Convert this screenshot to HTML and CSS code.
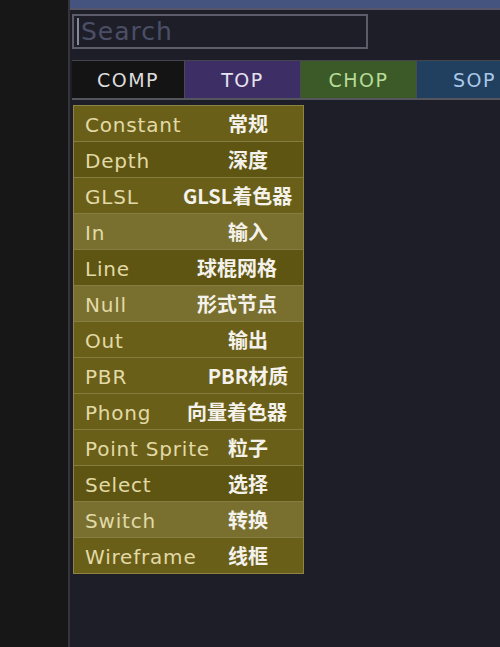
FILE: index.html
```html
<!DOCTYPE html>
<html lang="en">
<head>
    <meta charset="UTF-8">
    <title>OP Create Menu</title>
    <link rel="stylesheet" href="styles.css">
</head>
<body>
    <div class="sidebar"></div>
    <div class="main">
        <div class="top-bar"></div>

        <div class="search-box">
            <span class="caret"></span>
            <span class="placeholder">Search</span>
        </div>

        <div class="tabs">
            <div class="tab tab-comp">COMP</div>
            <div class="tab tab-top">TOP</div>
            <div class="tab tab-chop">CHOP</div>
            <div class="tab tab-sop">SOP</div>
        </div>

        <div class="op-menu">
            <div class="op-item"><span class="op-name">Constant</span><span class="op-label">常规</span></div>
            <div class="op-item dark"><span class="op-name">Depth</span><span class="op-label">深度</span></div>
            <div class="op-item"><span class="op-name">GLSL</span><span class="op-label wide">GLSL着色器</span></div>
            <div class="op-item light"><span class="op-name">In</span><span class="op-label">输入</span></div>
            <div class="op-item dark"><span class="op-name">Line</span><span class="op-label wide">球棍网格</span></div>
            <div class="op-item light"><span class="op-name">Null</span><span class="op-label wide">形式节点</span></div>
            <div class="op-item"><span class="op-name">Out</span><span class="op-label">输出</span></div>
            <div class="op-item"><span class="op-name">PBR</span><span class="op-label">PBR材质</span></div>
            <div class="op-item"><span class="op-name">Phong</span><span class="op-label wide">向量着色器</span></div>
            <div class="op-item"><span class="op-name">Point Sprite</span><span class="op-label">粒子</span></div>
            <div class="op-item dark"><span class="op-name">Select</span><span class="op-label">选择</span></div>
            <div class="op-item light"><span class="op-name">Switch</span><span class="op-label">转换</span></div>
            <div class="op-item"><span class="op-name">Wireframe</span><span class="op-label">线框</span></div>
        </div>
    </div>
</body>
</html>
```

FILE: styles.css
```css
* {
    margin: 0;
    padding: 0;
    box-sizing: border-box;
}

body {
    width: 500px;
    height: 647px;
    overflow: hidden;
    display: flex;
    background: #1e1e29;
    font-family: 'DejaVu Sans', Verdana, 'Noto Sans CJK SC', sans-serif;
}

.sidebar {
    width: 70px;
    flex-shrink: 0;
    background: #171717;
    border-right: 2px solid #34343a;
}

.main {
    flex: 1;
    min-width: 0;
    overflow: hidden;
    padding-left: 2px;
    background: #1e1e29;
}

.top-bar {
    height: 10px;
    margin-left: -2px;
    background: #44547e;
    border-bottom: 2px solid #56566a;
}

.search-box {
    width: 296px;
    height: 35px;
    margin-top: 4px;
    border: 2px solid #5c5c6a;
    display: flex;
    align-items: center;
    padding-left: 3px;
    gap: 2px;
}

.caret {
    width: 2px;
    height: 27px;
    background: #8a8a96;
}

.placeholder {
    font-size: 25px;
    letter-spacing: 1px;
    color: #4b4f66;
}

.tabs {
    display: flex;
    width: 460px;
    height: 40px;
    margin-top: 11px;
    border-top: 1px solid #44444c;
    border-bottom: 2px solid #55555e;
}

.tab {
    width: 116px;
    flex-shrink: 0;
    display: flex;
    align-items: center;
    justify-content: center;
    font-size: 19px;
    letter-spacing: 1.5px;
    border-right: 1px solid #4a4a55;
}

.tab-comp {
    width: 113px;
    background: #141414;
    color: #dcdcdc;
}

.tab-top {
    background: #3d2f66;
    color: #e6e2f0;
}

.tab-chop {
    background: #3b5a27;
    color: #b6dc98;
}

.tab-sop {
    background: #213f5f;
    color: #a9c8e8;
}

.op-menu {
    width: 231px;
    margin-top: 5px;
    margin-left: 1px;
    border: 1px solid #8c8444;
    background: #6a5f18;
}

.op-item {
    height: 36px;
    display: flex;
    align-items: center;
    padding-left: 11px;
    border-bottom: 1px solid #857d40;
    background: #6a5f18;
}

.op-item:last-child {
    border-bottom: none;
    height: 35px;
}

.op-item.dark {
    background: #5f5512;
}

.op-item.light {
    background: #797030;
}

.op-name {
    flex: 1;
    min-width: 0;
    font-size: 20px;
    letter-spacing: 0.8px;
    color: #e2daa6;
    white-space: nowrap;
    padding-top: 3px;
}

.op-label {
    width: 120px;
    flex-shrink: 0;
    text-align: center;
    font-family: 'Noto Sans CJK SC', sans-serif;
    font-weight: bold;
    font-size: 20px;
    line-height: 1;
    color: #f4f2ea;
    white-space: nowrap;
    padding-left: 10px;
}

.op-label.wide {
    padding-left: 0;
    padding-right: 12px;
}
```
